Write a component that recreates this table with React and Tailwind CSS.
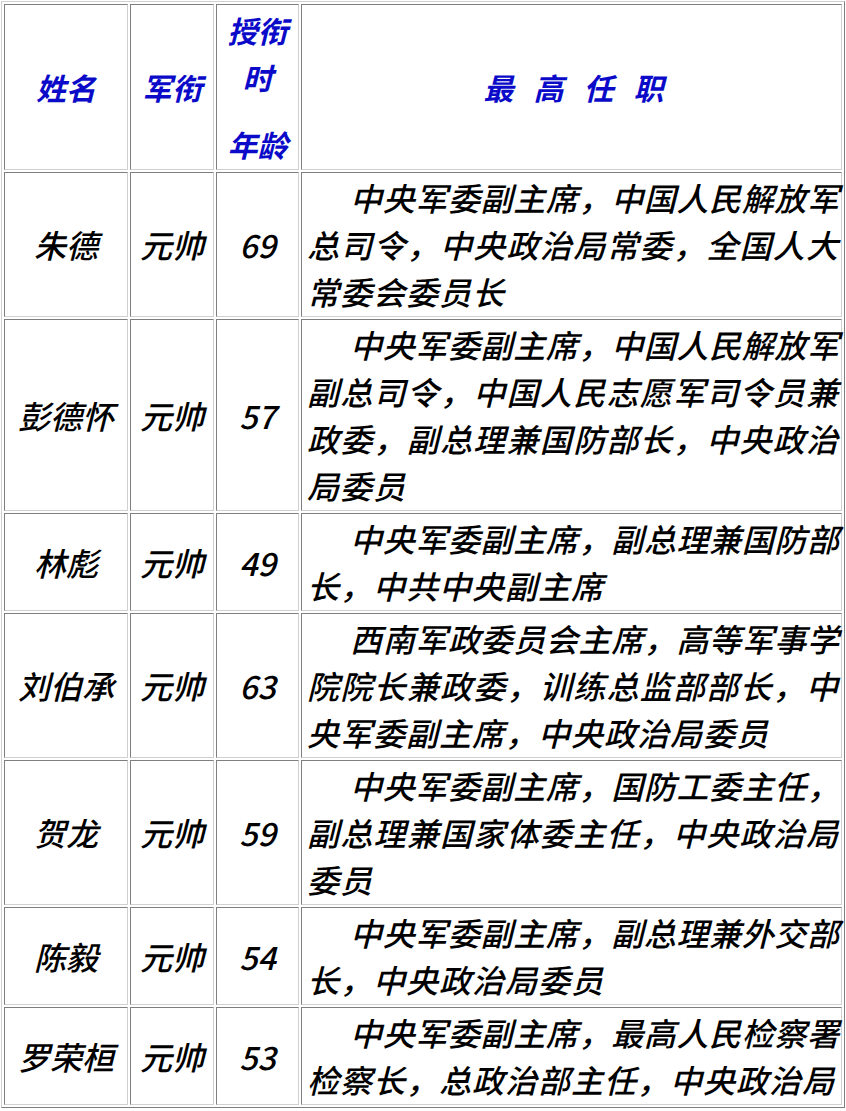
import React from "react";

const rows = [
  {
    name: "朱德",
    rank: "元帅",
    age: "69",
    lines: ["中央军委副主席，中国人民解放军", "总司令，中央政治局常委，全国人大", "常委会委员长"],
  },
  {
    name: "彭德怀",
    rank: "元帅",
    age: "57",
    lines: [
      "中央军委副主席，中国人民解放军",
      "副总司令，中国人民志愿军司令员兼",
      "政委，副总理兼国防部长，中央政治",
      "局委员",
    ],
  },
  {
    name: "林彪",
    rank: "元帅",
    age: "49",
    lines: ["中央军委副主席，副总理兼国防部", "长，中共中央副主席"],
  },
  {
    name: "刘伯承",
    rank: "元帅",
    age: "63",
    lines: ["西南军政委员会主席，高等军事学", "院院长兼政委，训练总监部部长，中", "央军委副主席，中央政治局委员"],
  },
  {
    name: "贺龙",
    rank: "元帅",
    age: "59",
    lines: ["中央军委副主席，国防工委主任，", "副总理兼国家体委主任，中央政治局", "委员"],
  },
  {
    name: "陈毅",
    rank: "元帅",
    age: "54",
    lines: ["中央军委副主席，副总理兼外交部", "长，中央政治局委员"],
  },
  {
    name: "罗荣桓",
    rank: "元帅",
    age: "53",
    lines: ["中央军委副主席，最高人民检察署", "检察长，总政治部主任，中央政治局"],
  },
];

const cell =
  "border border-t-[#7f7f7f] border-l-[#7f7f7f] border-r-[#d0d0d0] border-b-[#d0d0d0] p-0";

const Line = ({ text, first, last }) => {
  if (first) {
    return <div className="whitespace-nowrap pl-[43px] text-justify [text-align-last:justify]">{text}</div>;
  }
  if (last) {
    return <div className="whitespace-nowrap tracking-[1px]">{text}</div>;
  }
  return <div className="whitespace-nowrap tracking-[1px] text-justify [text-align-last:justify]">{text}</div>;
};

export default function App() {
  return (
    <div className="bg-white min-h-screen font-['Noto_Sans_CJK_SC',sans-serif] italic font-medium text-black">
      <table className="ml-px mt-px w-[844px] table-fixed border-separate border-spacing-[2px] border border-t-[#d0d0d0] border-l-[#d0d0d0] border-r-[#7f7f7f] border-b-[#7f7f7f]">
        <colgroup>
          <col className="w-[124px]" />
          <col className="w-[84px]" />
          <col className="w-[83px]" />
          <col className="w-[541px]" />
        </colgroup>
        <thead>
          <tr className="h-[166px] text-[30px] text-[#0a0ac8]">
            <th className={`${cell} align-middle text-center font-bold`}>姓名</th>
            <th className={`${cell} align-middle text-center font-bold`}>军衔</th>
            <th className={`${cell} align-middle text-center font-bold leading-[47px]`}>
              <div>授衔</div>
              <div>时</div>
              <div className="mt-[20px]">年龄</div>
            </th>
            <th className={`${cell} align-middle font-bold`}>
              <div className="flex justify-center gap-[20px] pl-[4px]">
                <span>最</span>
                <span>高</span>
                <span>任</span>
                <span>职</span>
              </div>
            </th>
          </tr>
        </thead>
        <tbody className="text-[32px] leading-[47px]">
          {rows.map((r) => (
            <tr key={r.name}>
              <td className={`${cell} align-middle text-center`}>{r.name}</td>
              <td className={`${cell} align-middle text-center`}>{r.rank}</td>
              <td className={`${cell} align-middle text-center`}>{r.age}</td>
              <td className={`${cell} align-top pl-[5px] pr-[2px] py-px`}>
                {r.lines.map((t, i) => (
                  <Line key={i} text={t} first={i === 0} last={i === r.lines.length - 1} />
                ))}
              </td>
            </tr>
          ))}
        </tbody>
      </table>
    </div>
  );
}
